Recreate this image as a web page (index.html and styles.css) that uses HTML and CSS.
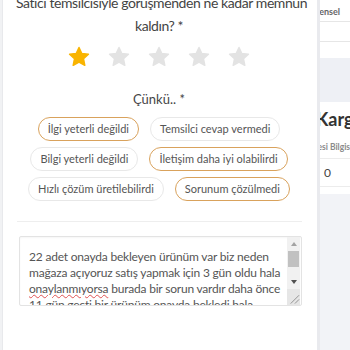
FILE: index.html
```html
<!DOCTYPE html>
<html lang="tr">
<head>
  <meta charset="UTF-8" />
  <meta name="viewport" content="width=device-width, initial-scale=1.0"/>
  <title>Değerlendirme</title>
  <link rel="stylesheet" href="styles.css">
</head>
<body>
  <div class="page">
    <div class="edge"></div>

    <div class="modal">
      <div class="question">Satıcı temsilcisiyle görüşmenden ne kadar memnun<br>kaldın? *</div>

      <div class="stars">
        <svg class="star on" viewBox="0 0 24 24"><path d="M12 2.5l2.8 6 6.6.8-4.9 4.5 1.3 6.5L12 17l-5.8 3.3 1.3-6.5-4.9-4.5 6.6-.8z"/></svg>
        <svg class="star" viewBox="0 0 24 24"><path d="M12 2.5l2.8 6 6.6.8-4.9 4.5 1.3 6.5L12 17l-5.8 3.3 1.3-6.5-4.9-4.5 6.6-.8z"/></svg>
        <svg class="star" viewBox="0 0 24 24"><path d="M12 2.5l2.8 6 6.6.8-4.9 4.5 1.3 6.5L12 17l-5.8 3.3 1.3-6.5-4.9-4.5 6.6-.8z"/></svg>
        <svg class="star" viewBox="0 0 24 24"><path d="M12 2.5l2.8 6 6.6.8-4.9 4.5 1.3 6.5L12 17l-5.8 3.3 1.3-6.5-4.9-4.5 6.6-.8z"/></svg>
        <svg class="star" viewBox="0 0 24 24"><path d="M12 2.5l2.8 6 6.6.8-4.9 4.5 1.3 6.5L12 17l-5.8 3.3 1.3-6.5-4.9-4.5 6.6-.8z"/></svg>
      </div>

      <div class="because">Çünkü.. *</div>

      <div class="chips">
        <div class="chip-row">
          <span class="chip selected">İlgi yeterli değildi</span>
          <span class="chip">Temsilci cevap vermedi</span>
        </div>
        <div class="chip-row">
          <span class="chip">Bilgi yeterli değildi</span>
          <span class="chip selected">İletişim daha iyi olabilirdi</span>
        </div>
        <div class="chip-row">
          <span class="chip">Hızlı çözüm üretilebilirdi</span>
          <span class="chip selected">Sorunum çözülmedi</span>
        </div>
      </div>

      <div class="divider"></div>

      <div class="comment">
        <div class="comment-text">22 adet onayda bekleyen ürünüm var biz neden<br>mağaza açıyoruz satış yapmak için 3 gün oldu hala<br><span class="typo">onaylanmıyorsa</span> burada bir sorun vardır daha önce<br>11 gün geçti bir ürünüm onayda bekledi hala<br>onaylanmadı lütfen yardımcı olun</div>
        <div class="scrollbar">
          <div class="sb-btn"><span class="arrow up"></span></div>
          <div class="sb-thumb"></div>
          <div class="sb-track"></div>
          <div class="sb-btn"><span class="arrow down"></span></div>
          <div class="sb-resize">
            <svg viewBox="0 0 14 14" width="14" height="14"><path d="M4 13L13 4M8.5 13L13 8.5" stroke="#8e8e8e" stroke-width="1"/></svg>
          </div>
        </div>
      </div>
    </div>

    <div class="side">
      <div class="side-top">
        <div class="side-head">Güvensel</div>
        <div class="side-line"></div>
      </div>
      <div class="side-band"></div>
      <div class="side-card">
        <div class="side-title">Kargo</div>
        <div class="side-label">Süresi Bilgisi</div>
        <div class="side-value">0</div>
      </div>
      <div class="side-rest"></div>
    </div>
  </div>
</body>
</html>
```

FILE: styles.css
```css
* { box-sizing: border-box; }
body {
  margin: 0;
  font-family: Lato, 'Open Sans', sans-serif;
  color: #4a4a4a;
  background: #f3f4f7;
}

.page {
  display: flex;
  height: 350px;
  overflow: hidden;
}

.edge {
  width: 3px;
  flex: none;
  background: #f1f2f4;
  border-right: 1px solid #e8e9ec;
}

.modal {
  width: 317px;
  flex: none;
  background: #ffffff;
  border-right: 3px solid #e9eaee;
  padding: 0 15px 0 13px;
  text-align: center;
  overflow: hidden;
}

.question {
  margin-top: -9px;
  font-size: 14px;
  letter-spacing: -0.42px;
  line-height: 23px;
  color: #444;
  white-space: nowrap;
}

.stars {
  display: flex;
  justify-content: center;
  gap: 16px;
  margin-top: 8px;
}

.star {
  width: 24px;
  height: 24px;
}
.star path {
  fill: #e3e3e3;
  stroke: #e3e3e3;
  stroke-width: 1.5;
  stroke-linejoin: round;
}
.star.on path {
  fill: #f9b400;
  stroke: #f9b400;
}

.because {
  margin-top: 21px;
  font-size: 13px;
  line-height: 18px;
  color: #444;
}

.chips {
  margin-top: 9px;
  display: flex;
  flex-direction: column;
  gap: 6px;
}

.chip-row {
  display: flex;
  justify-content: center;
  gap: 11px;
}

.chip {
  height: 24px;
  line-height: 22px;
  padding: 0 9px;
  border: 1px solid #e8e8e8;
  border-radius: 12px;
  font-size: 11px;
  color: #555;
  white-space: nowrap;
}
.chip.selected {
  border-color: #d9a25c;
}

.divider {
  margin-top: 20px;
  height: 1px;
  background: #eeeeee;
  margin-left: 1px;
}

.comment {
  margin: 14px 0 0 3px;
  height: 70px;
  display: flex;
  border: 1px solid #e3e3e3;
  border-radius: 2px;
  box-shadow: inset 0 1px 2px rgba(0,0,0,0.04);
  overflow: hidden;
}

.comment-text {
  flex: 1;
  padding: 12px 0 0 9px;
  text-align: left;
  font-size: 12px;
  letter-spacing: -0.2px;
  line-height: 16px;
  color: #555;
  white-space: nowrap;
  overflow: hidden;
}

.typo {
  text-decoration: underline wavy #e05252;
  text-decoration-thickness: 1px;
}

.scrollbar {
  width: 13px;
  flex: none;
  display: flex;
  flex-direction: column;
  background: #f1f1f1;
  margin-right: 1px;
}

.sb-btn {
  height: 14px;
  display: flex;
  align-items: center;
  justify-content: center;
}

.arrow {
  width: 0;
  height: 0;
  border-left: 3.5px solid transparent;
  border-right: 3.5px solid transparent;
}
.arrow.up {
  border-bottom: 4px solid #a3a3a3;
}
.arrow.down {
  border-top: 4px solid #505050;
}

.sb-thumb {
  height: 16px;
  margin: 0 1px;
  background: #c1c1c1;
}

.sb-track {
  flex: 1;
}

.sb-resize {
  height: 16px;
  background: #e6e6e6;
  display: flex;
  align-items: flex-end;
  justify-content: flex-end;
}
.sb-resize svg {
  display: block;
}

.side {
  flex: 1;
  display: flex;
  flex-direction: column;
  overflow: hidden;
}

.side-top {
  background: #ffffff;
  height: 58px;
  flex: none;
}

.side-head {
  height: 22px;
  line-height: 24px;
  font-size: 9px;
  font-weight: 700;
  color: #666;
  border-bottom: 1px solid #e6e6e6;
  white-space: nowrap;
  margin-left: -17px;
}

.side-line {
  height: 20px;
  border-bottom: 1px solid #e6e6e6;
}

.side-band {
  height: 44px;
  flex: none;
  background: #eef0f5;
}

.side-card {
  background: #ffffff;
  height: 92px;
  flex: none;
  white-space: nowrap;
}

.side-title {
  margin-left: -4px;
  padding-top: 6px;
  font-size: 18px;
  font-weight: 700;
  color: #333;
}

.side-label {
  margin-left: -15px;
  margin-top: 12px;
  font-size: 8.5px;
  font-weight: 700;
  color: #8a8a8a;
  padding-bottom: 6px;
  border-bottom: 1px solid #ececec;
}

.side-value {
  padding: 6px 0 6px 4px;
  font-size: 12px;
  color: #444;
  border-bottom: 1px solid #ececec;
}

.side-rest {
  flex: 1;
  background: #f2f3f7;
}
```
